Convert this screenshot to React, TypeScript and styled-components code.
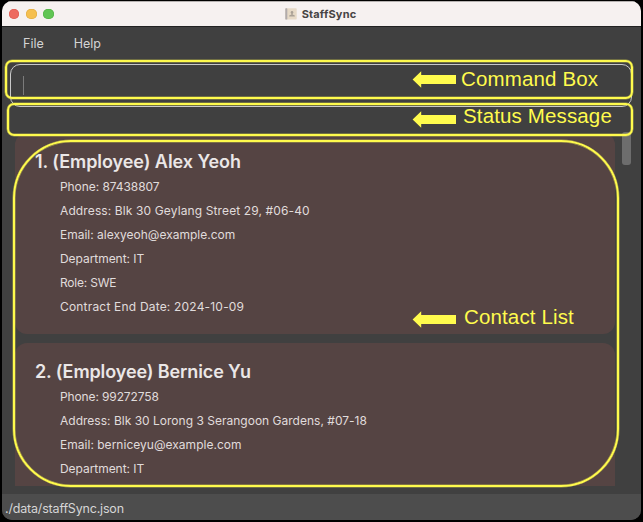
import React from "react";
import styled, { createGlobalStyle } from "styled-components";

const YELLOW = "#fffb4d";

const GlobalStyle = createGlobalStyle`
  * { box-sizing: border-box; }
  body { margin: 0; background: #000; overflow: hidden; }
`;

const Stage = styled.div`
  position: relative;
  width: 643px;
  height: 522px;
  padding: 1px 2px 2px 2px;
  background: #000;
  font-family: Inter, "DM Sans", sans-serif;
`;

const Window = styled.main`
  display: flex;
  flex-direction: column;
  height: 519px;
  border-radius: 10px;
  overflow: hidden;
  background: #404040;
`;

const TitleBar = styled.header`
  position: relative;
  display: flex;
  align-items: center;
  justify-content: center;
  flex: none;
  height: 26px;
  background: #f6f1f0;
  border-top: 1px solid #b5b1b0;
  border-bottom: 1px solid #222;
`;

const Lights = styled.div`
  position: absolute;
  left: 7px;
  top: 6.5px;
  display: flex;
  gap: 6.8px;
`;

const Light = styled.i<{ $fill: string; $edge: string }>`
  width: 10.4px;
  height: 10.4px;
  border-radius: 50%;
  background: ${(p) => p.$fill};
  box-shadow: inset 0 0 0 0.5px ${(p) => p.$edge};
`;

const Title = styled.h1`
  display: flex;
  align-items: center;
  gap: 5px;
  margin: 0 0 0 -2px;
  font-size: 11px;
  font-weight: 700;
  line-height: 14px;
  letter-spacing: 0.17px;
  color: #474444;
`;

const MenuBar = styled.nav`
  display: flex;
  flex: none;
  gap: 30px;
  height: 37px;
  padding: 8px 21px 0;
  font-size: 12.5px;
  line-height: 17px;
  color: #d4d4d4;
`;

const CommandBox = styled.div`
  flex: none;
  width: 622px;
  height: 43px;
  margin-left: 8px;
  padding: 11px 0 0 11.5px;
  border: 1px solid #c9c9c9;
  border-radius: 10px;
`;

const Caret = styled.div`
  width: 1.5px;
  height: 19px;
  background: #7b7b7b;
`;

const StatusArea = styled.div`
  flex: none;
  height: 28px;
`;

const ListPane = styled.section`
  display: flex;
  flex: none;
  height: 351px;
  padding-left: 13px;
`;

const Viewport = styled.div`
  width: 600px;
  height: 351px;
  overflow: hidden;
`;

const CardList = styled.div`
  display: flex;
  flex-direction: column;
  gap: 9px;
  margin-top: -2px;
`;

const Card = styled.article`
  flex: none;
  height: 201px;
  padding: 18px 20px 0;
  border-radius: 12px;
  background: #554443;
`;

const Name = styled.h2<{ $track: number }>`
  margin: 0;
  font-size: 18px;
  line-height: 22px;
  font-weight: 600;
  letter-spacing: ${(p) => p.$track}px;
  color: #ebe7e7;
  white-space: nowrap;
`;

const Fields = styled.div`
  display: flex;
  flex-direction: column;
  gap: 0.2px;
  padding: 1.5px 0 0 25px;
`;

const Field = styled.div<{ $track: number }>`
  height: 24px;
  font-size: 12px;
  line-height: 24px;
  letter-spacing: ${(p) => p.$track}px;
  color: #e0dcdc;
  white-space: nowrap;
`;

const ScrollThumb = styled.div`
  width: 9px;
  height: 33px;
  margin: -3px 0 0 7px;
  border-radius: 3px;
  background: #6d6d6d;
`;

const Footer = styled.footer`
  flex: none;
  margin-top: 8px;
  height: 26px;
  padding: 5px 0 0 3px;
  background: #4d4d4d;
  font-size: 12.5px;
  line-height: 19px;
  letter-spacing: -0.18px;
  color: #d6d6d6;
`;

const Outline = styled.div<{ $x: number; $y: number; $w: number; $h: number; $r: number }>`
  position: absolute;
  left: ${(p) => p.$x}px;
  top: ${(p) => p.$y}px;
  width: ${(p) => p.$w}px;
  height: ${(p) => p.$h}px;
  border: 2px solid ${YELLOW};
  border-radius: ${(p) => p.$r}px;
  box-shadow: 0 0 0 0.5px #fffb4d80, inset 0 0 0 0.5px #fffb4d80;
`;

const Callout = styled.div<{ $y: number }>`
  position: absolute;
  left: 412px;
  top: ${(p) => p.$y}px;
`;

const CalloutLabel = styled.div<{ $x: number; $y: number; $track: number }>`
  position: absolute;
  left: ${(p) => p.$x}px;
  top: ${(p) => p.$y}px;
  font-family: "Liberation Sans", Arial, sans-serif;
  font-size: 20.5px;
  line-height: 24px;
  letter-spacing: ${(p) => p.$track}px;
  color: ${YELLOW};
  white-space: nowrap;
`;

const Arrow = () => (
  <svg width="45" height="18" viewBox="0 0 45 18" display="block">
    <path d="M.6 8.4 9.2.2V4H44V12.9H9.2V16.7Z" fill={YELLOW} />
  </svg>
);

const BookIcon = () => (
  <svg width="12" height="12" viewBox="0 0 12 12">
    <rect x="0.3" y="0.3" width="11.4" height="11.2" rx="0.8" fill="#e6d9c6" />
    <rect x="0.3" y="0.3" width="2" height="11.2" rx="0.6" fill="#b1abac" />
    <circle cx="7" cy="4.4" r="1.3" fill="#aaa196" />
    <path d="M6.4 5h1.2v1.5l2.2.9V8.6H4.2V7.4l2.2-.9Z" fill="#aaa196" />
  </svg>
);

type Line = [text: string, track: number];

const contacts: { name: Line; fields: Line[] }[] = [
  {
    name: ["1. (Employee) Alex Yeoh", -0.06],
    fields: [
      ["Phone: 87438807", -0.07],
      ["Address: Blk 30 Geylang Street 29, #06-40", 0.12],
      ["Email: alexyeoh@example.com", 0],
      ["Department: IT", -0.05],
      ["Role: SWE", -0.22],
      ["Contract End Date: 2024-10-09", 0.19],
    ],
  },
  {
    name: ["2. (Employee) Bernice Yu", -0.11],
    fields: [
      ["Phone: 99272758", -0.12],
      ["Address: Blk 30 Lorong 3 Serangoon Gardens, #07-18", 0.01],
      ["Email: berniceyu@example.com", 0.02],
      ["Department: IT", -0.05],
    ],
  },
];

export default function App() {
  return (
    <Stage>
      <GlobalStyle />
      <Window>
        <TitleBar>
          <Lights>
            <Light $fill="#ed6a5f" $edge="#d9564c" />
            <Light $fill="#f5bf4f" $edge="#dba63b" />
            <Light $fill="#61c554" $edge="#4bad3f" />
          </Lights>
          <Title>
            <BookIcon />
            StaffSync
          </Title>
        </TitleBar>
        <MenuBar>
          <span>File</span>
          <span>Help</span>
        </MenuBar>
        <CommandBox>
          <Caret />
        </CommandBox>
        <StatusArea />
        <ListPane>
          <Viewport>
            <CardList>
              {contacts.map((c) => (
                <Card key={c.name[0]}>
                  <Name $track={c.name[1]}>{c.name[0]}</Name>
                  <Fields>
                    {c.fields.map(([text, track]) => (
                      <Field key={text} $track={track}>
                        {text}
                      </Field>
                    ))}
                  </Fields>
                </Card>
              ))}
            </CardList>
          </Viewport>
          <ScrollThumb />
        </ListPane>
        <Footer>./data/staffSync.json</Footer>
      </Window>

      <Outline $x={5} $y={60} $w={628} $h={39} $r={7} />
      <Outline $x={7} $y={103} $w={626} $h={33} $r={7} />
      <Outline $x={13} $y={140} $w={606} $h={347} $r={58} />
      <Callout $y={71}>
        <Arrow />
      </Callout>
      <Callout $y={111}>
        <Arrow />
      </Callout>
      <Callout $y={311}>
        <Arrow />
      </Callout>
      <CalloutLabel $x={461} $y={67} $track={0.14}>
        Command Box
      </CalloutLabel>
      <CalloutLabel $x={463} $y={104} $track={0.14}>
        Status Message
      </CalloutLabel>
      <CalloutLabel $x={464} $y={305} $track={0.14}>
        Contact List
      </CalloutLabel>
    </Stage>
  );
}
